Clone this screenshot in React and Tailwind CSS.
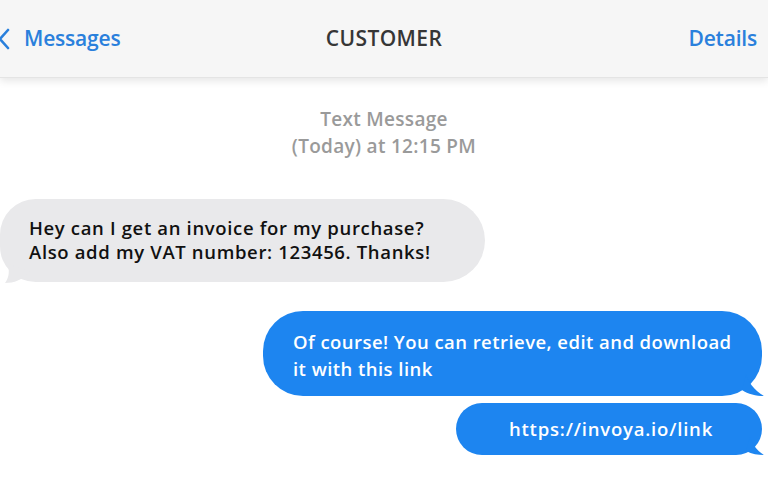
export default function App() {
  const font = { fontFamily: '"Open Sans", "Noto Sans", sans-serif' };
  return (
    <div className="w-[768px] h-[480px] bg-white overflow-hidden relative" style={font}>
      <div className="h-[78px] bg-[#f6f6f6] flex items-center justify-between pr-[11px] relative z-10 shadow-[0_3px_8px_rgba(0,0,0,0.10)] border-b border-[#e4e4e4]">
        <div className="flex items-center">
          <svg width="12" height="24" viewBox="0 0 12 24" className="-ml-[2px]">
            <path d="M10 3 L2 12 L10 21" fill="none" stroke="#2a80dc" strokeWidth="2.6" strokeLinecap="round" strokeLinejoin="round" />
          </svg>
          <span className="ml-[14px] text-[21px] font-semibold text-[#2a80dc] tracking-[-0.2px]">Messages</span>
        </div>
        <span className="absolute left-0 right-0 text-center text-[21px] font-semibold text-[#363636] tracking-[0.4px] pointer-events-none">CUSTOMER</span>
        <span className="text-[21px] font-semibold text-[#2a80dc] tracking-[-0.2px]">Details</span>
      </div>

      <div className="flex flex-col items-center mt-[28px] text-[19px] leading-[27px] text-[#9a9a9a] font-semibold tracking-[0.3px]">
        <span>Text Message</span>
        <span>(Today) at 12:15 PM</span>
      </div>

      <div className="mt-[39px] flex flex-col">
        <div className="relative self-start">
          <div className="bg-[#e9e9eb] w-[485px] h-[83px] rounded-r-[42px] rounded-l-[36px] pl-[29px] pt-[17px] text-[18.5px] leading-[24px] text-[#111] font-semibold tracking-[0.65px] whitespace-nowrap">
            <div>Hey can I get an invoice for my purchase?</div>
            <div>Also add my VAT number: 123456. Thanks!</div>
          </div>
          <svg width="30" height="20" viewBox="0 0 30 20" className="absolute left-[4px] bottom-[-2px]">
            <path d="M4 0 C6 10 4 15 1 19 C10 19 18 16 26 8 Z" fill="#e9e9eb" />
          </svg>
        </div>

        <div className="relative self-end mr-[6px] mt-[29px]">
          <div className="bg-[#1d85f0] w-[499px] h-[85px] rounded-[40px] pl-[30px] pt-[17px] text-[18.5px] leading-[27px] text-white font-semibold tracking-[0.45px] whitespace-nowrap">
            <div>Of course! You can retrieve, edit and download</div>
            <div>it with this link</div>
          </div>
          <svg width="24" height="22" viewBox="0 0 24 22" className="absolute right-[-4px] bottom-0">
            <path d="M4 0 C6 8 12 16 22 22 C14 22 6 20 0 16 Z" fill="#1d85f0" />
          </svg>
        </div>

        <div className="relative self-end mr-[6px] mt-[7px]">
          <div className="bg-[#1d85f0] w-[306px] h-[52px] rounded-[26px] flex items-center justify-center pl-[4px] text-[18.5px] text-white font-semibold tracking-[0.8px]">
            https://invoya.io/link
          </div>
          <svg width="20" height="18" viewBox="0 0 20 18" className="absolute right-[-4px] bottom-0">
            <path d="M4 0 C6 6 10 13 18 18 C12 18 6 17 0 14 Z" fill="#1d85f0" />
          </svg>
        </div>
      </div>
    </div>
  );
}
